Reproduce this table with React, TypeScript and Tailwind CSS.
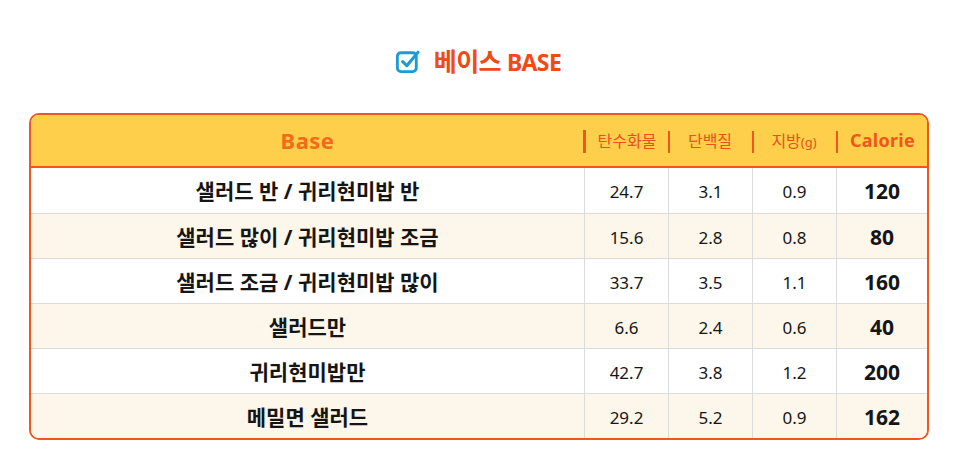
import React from 'react';

interface BaseRow {
  name: string;
  carb: string;
  protein: string;
  fat: string;
  kcal: string;
}

const rows: BaseRow[] = [
  { name: '샐러드 반 / 귀리현미밥 반', carb: '24.7', protein: '3.1', fat: '0.9', kcal: '120' },
  { name: '샐러드 많이 / 귀리현미밥 조금', carb: '15.6', protein: '2.8', fat: '0.8', kcal: '80' },
  { name: '샐러드 조금 / 귀리현미밥 많이', carb: '33.7', protein: '3.5', fat: '1.1', kcal: '160' },
  { name: '샐러드만', carb: '6.6', protein: '2.4', fat: '0.6', kcal: '40' },
  { name: '귀리현미밥만', carb: '42.7', protein: '3.8', fat: '1.2', kcal: '200' },
  { name: '메밀면 샐러드', carb: '29.2', protein: '5.2', fat: '0.9', kcal: '162' },
];

const font = { fontFamily: '"Noto Sans", "Noto Sans CJK KR", sans-serif' };

const CheckIcon = () => (
  <svg width="26" height="26" viewBox="0 0 22 22" fill="none">
    <rect x="2" y="4" width="16" height="16" rx="3" stroke="#1c9ad6" strokeWidth="2.4" />
    <path d="M6.5 11.5 L10 15 L19.5 3.5" stroke="#1c9ad6" strokeWidth="2.6" strokeLinecap="round" strokeLinejoin="round" />
  </svg>
);

const App = () => {
  return (
    <div className="w-[966px] h-[459px] bg-white" style={font}>
      {/* Title */}
      <div className="flex items-center justify-center gap-[13px] pt-[44px] h-[78px]">
        <div className="-ml-[10px]">
          <CheckIcon />
        </div>
        <h2 className="text-[25px] font-bold text-[#f04a17] leading-none tracking-tight">
          베이스 <span className="text-[23px]">BASE</span>
        </h2>
      </div>

      {/* Table */}
      <div className="w-[900px] ml-[29px] mt-[35px] border-2 border-[#f0561d] rounded-[10px] overflow-hidden">
        {/* Header */}
        <div className="grid grid-cols-[553px_84px_84px_84px_91px] h-[53px] bg-[#fecf4b] border-b-2 border-[#f0561d] items-center">
          <div className="text-center text-[22px] font-bold tracking-[0.5px] text-[#f26a1a]">Base</div>
          <div className="relative flex items-center justify-center h-full">
            <span className="absolute left-[-1px] top-[15px] h-[23px] w-[3px] bg-[#f0561d]" />
            <span className="text-[16px] text-[#e9511e] pl-[2px]">탄수화물</span>
          </div>
          <div className="relative flex items-center justify-center h-full">
            <span className="absolute left-0 top-[16px] h-[22px] w-[1.5px] bg-[#f0561d]" />
            <span className="text-[16px] text-[#e9511e]">단백질</span>
          </div>
          <div className="relative flex items-center justify-center h-full">
            <span className="absolute left-0 top-[16px] h-[22px] w-[1.5px] bg-[#f0561d]" />
            <span className="text-[16px] text-[#e9511e]">
              지방<span className="text-[13px]">(g)</span>
            </span>
          </div>
          <div className="relative flex items-center justify-center h-full">
            <span className="absolute left-0 top-[16px] h-[22px] w-[1.5px] bg-[#f0561d]" />
            <span className="text-[18px] font-bold tracking-[0.3px] text-[#f0561d] pl-[2px]">Calorie</span>
          </div>
        </div>

        {/* Body */}
        {rows.map((row, i) => (
          <div
            key={row.name}
            className={`grid grid-cols-[553px_84px_84px_84px_91px] h-[45px] text-[#151515] ${
              i % 2 === 0 ? 'bg-white' : 'bg-[#fdf6ea]'
            } ${i > 0 ? 'border-t border-[#dcdcdc]' : ''}`}
          >
            <div className="flex items-center justify-center pt-[3px] text-[21px] font-bold">{row.name}</div>
            <div className="flex items-center justify-center pt-[3px] border-l border-[#dcdcdc] text-[17px]">{row.carb}</div>
            <div className="flex items-center justify-center pt-[3px] border-l border-[#dcdcdc] text-[17px]">{row.protein}</div>
            <div className="flex items-center justify-center pt-[3px] border-l border-[#dcdcdc] text-[17px]">{row.fat}</div>
            <div className="flex items-center justify-center pt-[3px] border-l border-[#dcdcdc] text-[21px] font-bold">{row.kcal}</div>
          </div>
        ))}
      </div>
    </div>
  );
};

export default App;
